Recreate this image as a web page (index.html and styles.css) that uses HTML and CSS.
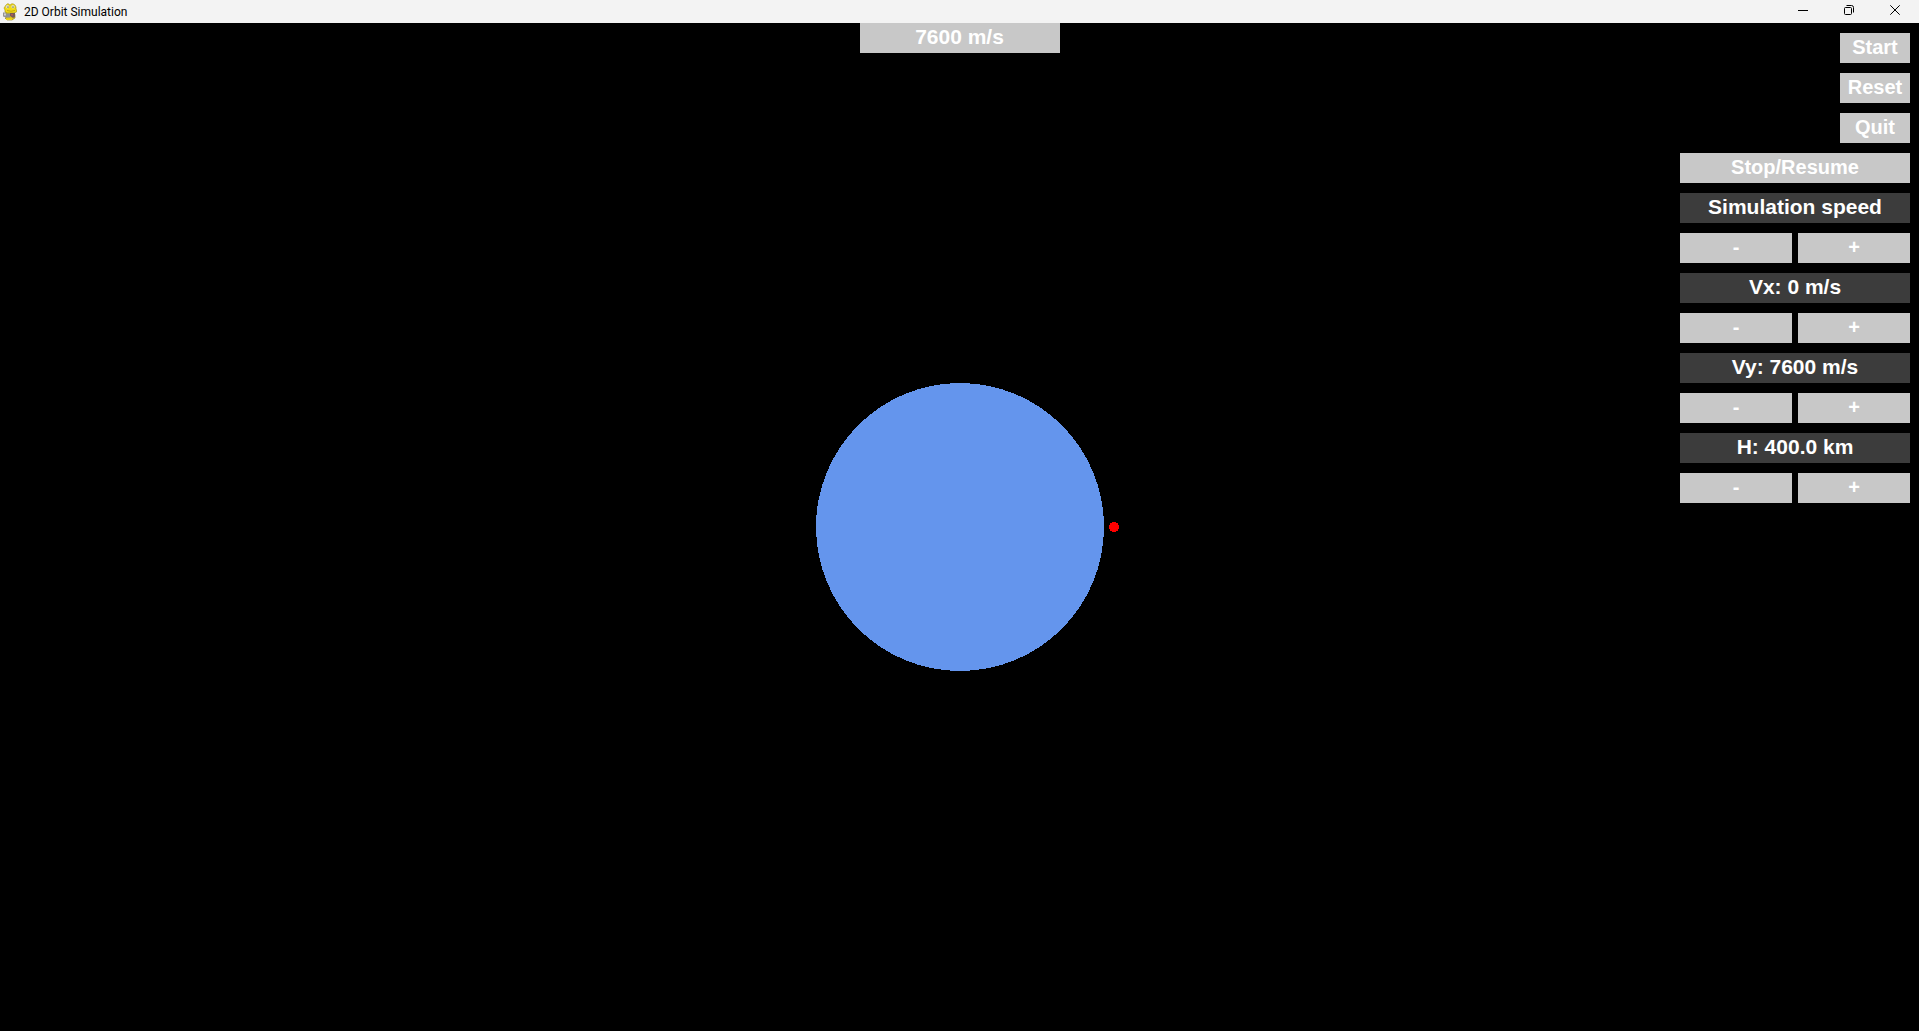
FILE: index.html
```html
<!DOCTYPE html>
<html lang="en">
<head>
<meta charset="utf-8">
<title>2D Orbit Simulation</title>
<link rel="stylesheet" href="styles.css">
</head>
<body>
<header class="titlebar">
  <svg class="app-icon" width="16" height="18" viewBox="0 0 16 18" aria-hidden="true">
    <path d="M4 9h8l1 3v3l-3 2H5l-2-2 2-1-1-3z" fill="#d9c21c" stroke="#8b7b18" stroke-width=".6"/>
    <path d="M4 2 5.500.8 7 1l1 1.500L9 1l2-.2L13 2l1 2v2l.5 1v2L12 10H5L3 9V7L2 5z" fill="#f3dc13" stroke="#a08e16" stroke-width=".6"/>
    <circle cx="5.500" cy="3.800" r="1.700" fill="#dcdcc4"/>
    <circle cx="11" cy="3.800" r="1.700" fill="#dcdcc4"/>
    <path d="M5.500 3.500h1v1.200h-1zM10.500 3.500h1v1.200h-1z" fill="#66601e"/>
    <path d="M5 7.500q4 1.500 8 0" fill="none" stroke="#b39a10" stroke-width=".8"/>
    <path d="M1 9.500h3v1h4v4H4l-3-1z" fill="#929292"/>
    <path d="M2 10.500h2v2H2z" fill="#d0d0cc"/>
    <path d="M8 10h5v4l-2 1-3-2z" fill="#765a58"/>
    <path d="M9 11h2v1.500H9z" fill="#b35a50"/>
    <path d="M4 15.500h6v1.500H4z" fill="#f0d716"/>
  </svg>
  <h1 class="title">2D Orbit Simulation</h1>
  <div class="window-controls">
    <button class="window-button" type="button" aria-label="Minimize">
      <svg width="10" height="10" viewBox="0 0 10 10"><path d="M0 5.500h10"/></svg>
    </button>
    <button class="window-button" type="button" aria-label="Restore">
      <svg width="10" height="10" viewBox="0 0 10 10"><rect x=".5" y="2.500" width="7" height="7" rx="1"/><path d="M2.500.5H7.500a2 2 0 0 1 2 2V7.500"/></svg>
    </button>
    <button class="window-button" type="button" aria-label="Close">
      <svg width="10" height="10" viewBox="0 0 10 10"><path d="M.3.3l9.400 9.400M9.700.3.3 9.700"/></svg>
    </button>
  </div>
</header>
<main class="stage">
  <svg class="scene" width="321" height="288" viewBox="0 0 321 288" role="img" aria-label="Planet and satellite">
    <circle class="planet" cx="161" cy="144" r="144"/>
    <circle class="satellite" cx="315" cy="144" r="5"/>
  </svg>
  <output class="readout">7600 m/s</output>
  <div class="panel">
    <button class="control control-short" type="button">Start</button>
    <button class="control control-short" type="button">Reset</button>
    <button class="control control-short" type="button">Quit</button>
    <button class="control" type="button">Stop/Resume</button>
    <div class="label" id="speed">Simulation speed</div>
    <div class="stepper" role="group" aria-labelledby="speed">
      <button class="control" type="button">-</button>
      <button class="control" type="button">+</button>
    </div>
    <div class="label" id="vx">Vx: 0 m/s</div>
    <div class="stepper" role="group" aria-labelledby="vx">
      <button class="control" type="button">-</button>
      <button class="control" type="button">+</button>
    </div>
    <div class="label" id="vy">Vy: 7600 m/s</div>
    <div class="stepper" role="group" aria-labelledby="vy">
      <button class="control" type="button">-</button>
      <button class="control" type="button">+</button>
    </div>
    <div class="label" id="height">H: 400.0 km</div>
    <div class="stepper" role="group" aria-labelledby="height">
      <button class="control" type="button">-</button>
      <button class="control" type="button">+</button>
    </div>
  </div>
</main>
</body>
</html>
```
FILE: styles.css
```css
* {
  box-sizing: border-box;
}

body {
  margin: 0;
  min-height: 100vh;
  display: flex;
  flex-direction: column;
  background: #000;
  font-family: "Liberation Sans", Arial, sans-serif;
}

.titlebar {
  display: flex;
  align-items: center;
  height: 23px;
  padding: 0 1px 0 2px;
  background: #f3f3f3;
  color: #000;
}

.app-icon {
  flex: none;
}

.title {
  flex: 1;
  margin: 0 0 0 6px;
  font: 400 12px/22px Roboto, "Open Sans", sans-serif;
}

.window-controls {
  display: flex;
  align-self: stretch;
}

.window-button {
  display: flex;
  align-items: center;
  justify-content: center;
  width: 46px;
  padding: 0 0 3px;
  border: 0;
  background: none;
}

.window-button svg {
  fill: none;
  stroke: #000;
}

.stage {
  flex: 1;
  display: grid;
  grid-template-columns: 1fr 200px 1fr;
  align-items: start;
}

.scene {
  grid-area: 1 / 1 / 2 / 4;
  place-self: center;
  shape-rendering: crispEdges;
}

.planet {
  fill: #6495ed;
}

.satellite {
  fill: #f00;
}

.readout,
.control,
.label {
  display: block;
  height: 30px;
  padding: 0;
  border: 0;
  color: #fff;
  font: 700 21px/28px "Liberation Sans", Arial, sans-serif;
  text-align: center;
}

.readout,
.control {
  background: #c8c8c8;
}

.control {
  padding-bottom: 2px;
  font-size: 20px;
}

.label {
  background: #3c3c3c;
}

.readout {
  grid-area: 1 / 2;
}

.panel {
  grid-area: 1 / 3;
  justify-self: end;
  display: flex;
  flex-direction: column;
  gap: 10px;
  width: 230px;
  margin: 10px 9px 10px 0;
}

.control-short {
  align-self: flex-end;
  width: 70px;
}

.stepper {
  display: grid;
  grid-template-columns: 1fr 1fr;
  gap: 6px;
}
```
